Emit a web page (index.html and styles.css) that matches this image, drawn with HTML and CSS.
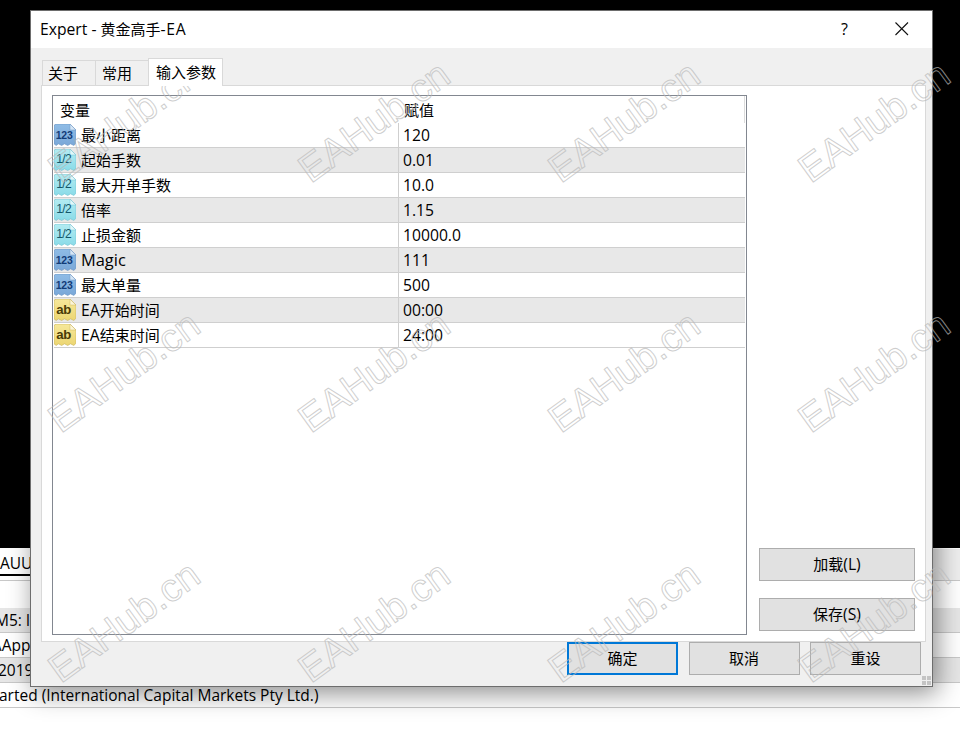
FILE: index.html
```html
<!DOCTYPE html>
<html lang="zh-CN">
<head>
<meta charset="utf-8">
<title>Expert - 黄金高手-EA</title>
<link rel="stylesheet" href="styles.css">
</head>
<body>
<svg class="defs" width="0" height="0" aria-hidden="true">
  <defs>
    <linearGradient id="g-int" x1="0" y1="0" x2="0" y2="1"><stop offset="0" stop-color="#8fbce6"/><stop offset="1" stop-color="#7aa8d8"/></linearGradient>
    <linearGradient id="g-dbl" x1="0" y1="0" x2="0" y2="1"><stop offset="0" stop-color="#b4ecf2"/><stop offset="1" stop-color="#8adbe8"/></linearGradient>
    <linearGradient id="g-str" x1="0" y1="0" x2="0" y2="1"><stop offset="0" stop-color="#f6e89a"/><stop offset="1" stop-color="#ecd672"/></linearGradient>
    <path id="doc" d="M1 3.5Q1 1 3.5 1H15.5L21 6.5V18.5L19 20.5 16 19 13.5 20.5 10.5 19 8 20.5 5 19 3 20.5 1 19Z"/>
    <path id="fold" d="M15.5 1V6.5H21Z"/>
  </defs>
</svg>

<main class="desktop">
  <div class="black"></div>
  <div class="bg-tabs"><span class="bg-tab">AUU</span></div>
  <div class="bg-gap"></div>
  <div class="bg-row alt shift-m">M5: lo</div>
  <div class="bg-row shift-a">\App</div>
  <div class="bg-row alt shift-y">2019</div>
  <div class="bg-row last shift-s">arted (International Capital Markets Pty Ltd.)</div>
</main>

<section class="window">
  <header class="titlebar">
    <span class="title">Expert - <span class="cjk">黄金高手</span><span class="tail">-EA</span></span>
    <span class="help">?</span>
    <svg class="close" width="16" height="16" viewBox="0 0 16 16"><path d="M1.5 1.5 14 14M14 1.5 1.5 14"/></svg>
  </header>
  <div class="body">
    <nav class="tabs">
      <span class="tab">关于</span>
      <span class="tab">常用</span>
      <span class="tab active">输入参数</span>
    </nav>
    <div class="panel">
      <div class="table">
        <div class="row head"><span class="name">变量</span><span class="value">赋值</span></div>

        <div class="row"><span class="name"><svg class="icon int" viewBox="1 1 20 20"><use href="#doc"/><use href="#fold" class="f"/><text x="2.6" y="14.5">123</text></svg>最小距离</span><span class="value">120</span></div>
        <div class="row alt"><span class="name"><svg class="icon dbl" viewBox="1 1 20 20"><use href="#doc"/><use href="#fold" class="f"/><text x="3" y="14">1/2</text></svg>起始手数</span><span class="value">0.01</span></div>
        <div class="row"><span class="name"><svg class="icon dbl" viewBox="1 1 20 20"><use href="#doc"/><use href="#fold" class="f"/><text x="3" y="14">1/2</text></svg>最大开单手数</span><span class="value">10.0</span></div>
        <div class="row alt"><span class="name"><svg class="icon dbl" viewBox="1 1 20 20"><use href="#doc"/><use href="#fold" class="f"/><text x="3" y="14">1/2</text></svg>倍率</span><span class="value">1.15</span></div>
        <div class="row"><span class="name"><svg class="icon dbl" viewBox="1 1 20 20"><use href="#doc"/><use href="#fold" class="f"/><text x="3" y="14">1/2</text></svg>止损金额</span><span class="value">10000.0</span></div>
        <div class="row alt"><span class="name"><svg class="icon int" viewBox="1 1 20 20"><use href="#doc"/><use href="#fold" class="f"/><text x="2.6" y="14.5">123</text></svg><span class="wide-lat">Magic</span></span><span class="value">111</span></div>
        <div class="row"><span class="name"><svg class="icon int" viewBox="1 1 20 20"><use href="#doc"/><use href="#fold" class="f"/><text x="2.6" y="14.5">123</text></svg>最大单量</span><span class="value">500</span></div>
        <div class="row alt"><span class="name"><svg class="icon str" viewBox="1 1 20 20"><use href="#doc"/><use href="#fold" class="f"/><text x="3" y="15">ab</text></svg><span><span class="lat">EA</span>开始时间</span></span><span class="value">00:00</span></div>
        <div class="row"><span class="name"><svg class="icon str" viewBox="1 1 20 20"><use href="#doc"/><use href="#fold" class="f"/><text x="3" y="15">ab</text></svg><span><span class="lat">EA</span>结束时间</span></span><span class="value">24:00</span></div>
      </div>
      <div class="side">
        <button class="btn wide">加载<span class="lat">(L)</span></button>
        <button class="btn wide">保存<span class="lat">(S)</span></button>
      </div>
    </div>
    <footer class="footer">
      <button class="btn primary">确定</button>
      <button class="btn">取消</button>
      <button class="btn">重设</button>
    </footer>
    <svg class="grip" width="11" height="11" viewBox="0 0 11 11"><path d="M1 1h4v4H1zM6 1h4v4H6zM1 6h4v4H1zM6 6h4v4H6z"/></svg>
  </div>
</section>

<div class="marks" aria-hidden="true">
  <span class="cell"><b>EAHub.cn</b></span><span class="cell"><b>EAHub.cn</b></span><span class="cell"><b>EAHub.cn</b></span><span class="cell"><b>EAHub.cn</b></span>
  <span class="cell"><b>EAHub.cn</b></span><span class="cell"><b>EAHub.cn</b></span><span class="cell"><b>EAHub.cn</b></span><span class="cell"><b>EAHub.cn</b></span>
  <span class="cell"><b>EAHub.cn</b></span><span class="cell"><b>EAHub.cn</b></span><span class="cell"><b>EAHub.cn</b></span><span class="cell"><b>EAHub.cn</b></span>
</div>
</body>
</html>
```

FILE: styles.css
```css
* { box-sizing: border-box; }
html, body { margin: 0; height: 731px; overflow: hidden; background: #fff; }
body {
  position: relative;
  font: 15px/20px "Open Sans", "Noto Sans CJK SC", sans-serif;
  color: #000;
}
.defs { position: absolute; }
.lat { font-size: 15.7px; }
.wide-lat { font-size: 16.4px; }

/* desktop behind the dialog */
.desktop { display: flex; flex-direction: column; }
.black { height: 548px; background: #000; }
.bg-tabs {
  height: 33px;
  padding-top: 4px;
  background: linear-gradient(90deg, #fff 0 100px, #eee 100px);
  border-top: 1px solid #fff;
  border-bottom: 1px solid #c8c8c8;
}
.bg-tab {
  display: block;
  width: 100px;
  height: 23px;
  border-bottom: 2px solid #000;
  line-height: 20px;
  font-size: 15.5px;
  overflow: hidden;
  white-space: nowrap;
}
.bg-gap { height: 27px; }
.bg-row {
  height: 25px;
  line-height: 24px;
  font-size: 15.5px;
  white-space: nowrap;
  overflow: hidden;
  border-bottom: 1px solid #c8c8c8;
}
.bg-row.alt { background: #e6e6e6; }
.shift-m { text-indent: -5px; }
.shift-a { text-indent: -4px; }
.shift-y { text-indent: -2px; }
.shift-s { text-indent: -1px; }

/* dialog */
.window {
  position: absolute;
  left: 30px;
  top: 10px;
  width: 903px;
  height: 677px;
  display: flex;
  flex-direction: column;
  background: #f0f0f0;
  border: 1px solid #6d6d6d;
  box-shadow: 4px 6px 24px rgba(0, 0, 0, .45);
}
.titlebar {
  height: 37px;
  flex: none;
  display: flex;
  align-items: center;
  padding: 0 22px 2px 9px;
  background: #fff;
}
.title { flex: 1; font-size: 15.7px; }
.title .cjk { font-size: 15px; }
.title .tail { letter-spacing: .7px; }
.help { font-size: 16px; margin-right: 46px; }
.close { fill: none; stroke: #111; stroke-width: 1.1; }

.body { flex: 1; display: flex; flex-direction: column; padding: 10px 11px 10px 10px; position: relative; }
.tabs { display: flex; height: 27px; padding-left: 1px; position: relative; z-index: 1; align-items: flex-end; }
.tab {
  width: 53px;
  height: 25px;
  line-height: 25px;
  padding-left: 5px;
  border: 1px solid #d9d9d9;
  border-bottom: 0;
  border-right: 0;
}
.tab + .tab { padding-left: 6px; }
.tab.active {
  width: 75px;
  height: 28px;
  margin-bottom: -1px;
  padding-left: 7px;
  line-height: 26px;
  background: #fff;
  border-right: 1px solid #d9d9d9;
}
.panel {
  height: 557px;
  width: 885px;
  flex: none;
  display: flex;
  gap: 12px;
  padding: 9px 9px 6px 10px;
  background: #fff;
  border: 1px solid #d9d9d9;
}
.table {
  width: 695px;
  border: 1px solid #828790;
  padding: 0 1px;
  background: #fff;
}
.row {
  display: grid;
  grid-template-columns: 344px 1fr;
  height: 25px;
  border-bottom: 1px solid #cfcfcf;
}
.row.alt { background: #e8e8e8; }
.row.head { height: 27px; border-bottom: 0; position: relative; }
.row.head .name { padding-left: 6px; }
.row.head .value { border-left: 0; padding-left: 6px; border-right: 1px solid #dcdcdc; font-size: 15px; }
.name { display: flex; align-items: center; gap: 5px; white-space: nowrap; }
.value { display: flex; align-items: center; padding-left: 4px; border-left: 1px solid #cfcfcf; font-size: 15.7px; }
.icon { width: 22px; height: 22px; flex: none; }
.icon text { font: 700 9.5px "Liberation Sans", sans-serif; letter-spacing: -.2px; stroke: none; }
.icon .f { fill: #fff; opacity: .65; }
.int { fill: url(#g-int); stroke: #6d96c4; stroke-width: .6; }
.int text { fill: #123c78; }
.dbl { fill: url(#g-dbl); stroke: #74c4d2; stroke-width: .6; }
.dbl text { fill: #14586c; font-size: 11px; letter-spacing: -.6px; font-weight: 400; }
.str { fill: url(#g-str); stroke: #cbb65c; stroke-width: .6; }
.str text { fill: #4a3c08; font-size: 12px; }

.side { flex: 1; display: flex; flex-direction: column; justify-content: flex-end; gap: 17px; padding-bottom: 4px; }
.btn {
  width: 111px;
  height: 33px;
  padding: 0 0 2px;
  font: inherit;
  color: #000;
  background: #e1e1e1;
  border: 1px solid #adadad;
}
.btn.wide { width: 156px; }
.btn.primary { border: 2px solid #0078d7; }
.footer { display: flex; justify-content: flex-end; gap: 10.5px; }
.grip { position: absolute; right: 0; bottom: 0; fill: #c4c4c4; }

/* watermark */
.marks {
  position: absolute;
  left: -1px;
  top: -4px;
  display: grid;
  grid-template-columns: repeat(4, 250px);
  grid-auto-rows: 250px;
  pointer-events: none;
}
.cell { display: flex; align-items: center; justify-content: center; }
.cell b {
  font: 400 39px/1 "Liberation Sans", sans-serif;
  color: transparent;
  -webkit-text-stroke: 1px rgba(185, 185, 185, .7);
  transform: rotate(-36deg);
  white-space: nowrap;
}
```
